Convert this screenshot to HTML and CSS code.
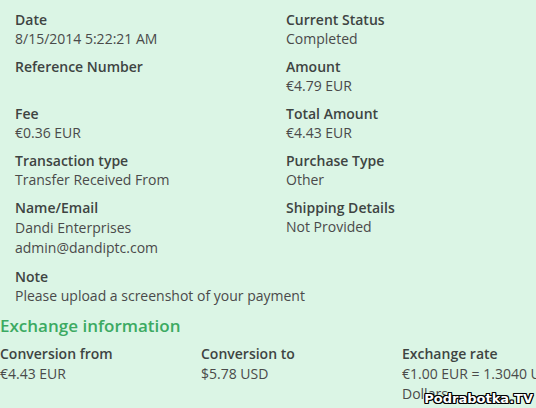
FILE: index.html
```html
<!DOCTYPE html>
<html>
<head>
<meta charset="utf-8">
<link rel="stylesheet" href="styles.css">
</head>
<body>
<div class="page">
  <div class="details">
    <div class="col">
      <div class="field"><div class="label">Date</div><div class="value">8/15/2014 5:22:21 AM</div></div>
      <div class="field"><div class="label">Reference Number</div><div class="value">&nbsp;</div></div>
      <div class="field"><div class="label">Fee</div><div class="value">€0.36 EUR</div></div>
      <div class="field"><div class="label">Transaction type</div><div class="value">Transfer Received From</div></div>
      <div class="field"><div class="label">Name/Email</div><div class="value multi">Dandi Enterprises<br>admin@dandiptc.com</div></div>
      <div class="field wide"><div class="label">Note</div><div class="value">Please upload a screenshot of your payment</div></div>
    </div>
    <div class="col">
      <div class="field"><div class="label">Current Status</div><div class="value">Completed</div></div>
      <div class="field"><div class="label">Amount</div><div class="value">€4.79 EUR</div></div>
      <div class="field"><div class="label">Total Amount</div><div class="value">€4.43 EUR</div></div>
      <div class="field"><div class="label">Purchase Type</div><div class="value">Other</div></div>
      <div class="field"><div class="label">Shipping Details</div><div class="value">Not Provided</div></div>
    </div>
  </div>
  <h2 class="section-title">Exchange information</h2>
  <div class="exchange">
    <div class="field"><div class="label">Conversion from</div><div class="value">€4.43 EUR</div></div>
    <div class="field"><div class="label">Conversion to</div><div class="value">$5.78 USD</div></div>
    <div class="field rate"><div class="label">Exchange rate</div><div class="value">€1.00 EUR = 1.3040 U.S. Dollars</div></div>
  </div>
</div>
<div class="watermark">Podrabotka.TV</div>
</body>
</html>
```
FILE: styles.css
```css
html, body {
  margin: 0;
  padding: 0;
  background: #dbf5e5;
  overflow: hidden;
}
body {
  width: 536px;
  height: 408px;
  font-family: "Open Sans", sans-serif;
  font-size: 14px;
  line-height: 20px;
  color: #464646;
  position: relative;
}
.page {
  padding-top: 10px;
}
.details {
  display: grid;
  grid-template-columns: 271px 271px;
  width: 542px;
}
.col {
  padding-left: 15px;
}
.field {
  margin-bottom: 8px;
}
.label {
  font-weight: 600;
  line-height: 19px;
  color: #3e4442;
}
.value {
  color: #4a4a4a;
}
.multi {
  line-height: 20.5px;
  padding-top: 0.5px;
}
.wide {
  width: 520px;
  margin-top: 4px;
}
.section-title {
  margin: 0;
  font-size: 17px;
  line-height: 24px;
  font-weight: 600;
  color: #3caa62;
}
.exchange {
  display: grid;
  grid-template-columns: 201px 201px 201px;
  width: 603px;
  padding-top: 6px;
}
.exchange .label {
  line-height: 20px;
}
.rate .value {
  width: 170px;
}
.watermark {
  position: absolute;
  right: 3px;
  bottom: 1px;
  font-family: "DejaVu Sans", sans-serif;
  font-weight: bold;
  font-size: 13px;
  line-height: 16px;
  color: #fff;
  text-shadow: -1px -1px 0 #000, 1px -1px 0 #000, -1px 1px 0 #000, 1px 1px 0 #000, 0 1px 0 #000, 0 -1px 0 #000, 1px 0 0 #000, -1px 0 0 #000;
}
```
